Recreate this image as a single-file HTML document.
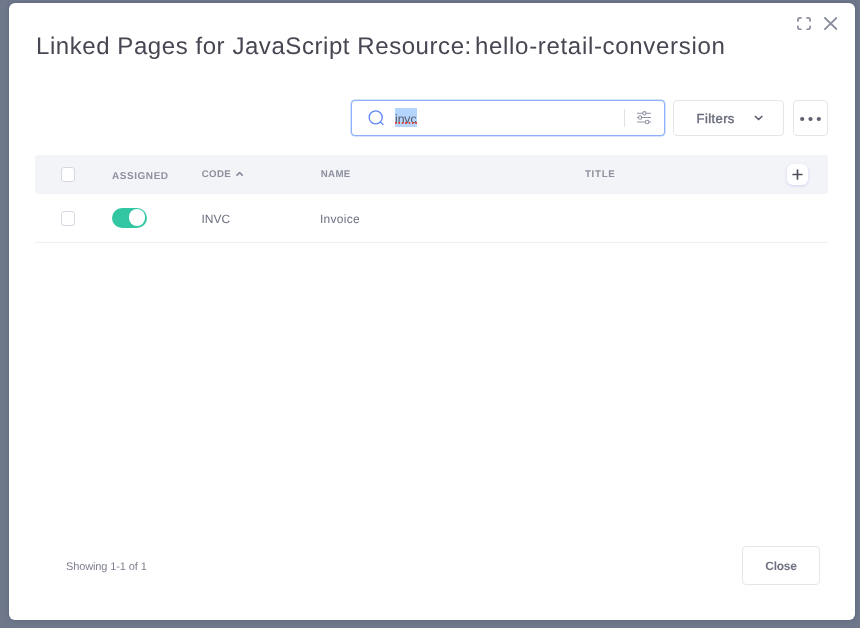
<!DOCTYPE html>
<html><head><meta charset="utf-8">
<style>
*{box-sizing:border-box;margin:0;padding:0}
html,body{width:860px;height:628px;overflow:hidden}
body{text-rendering:geometricPrecision;background:#6f788b;font-family:"Liberation Sans",sans-serif;position:relative}
.modal{will-change:transform;position:absolute;left:9px;top:3px;width:845.700px;height:617px;background:#fff;border-radius:6px;box-shadow:0 0 4px rgba(60,70,100,.45)}
.abs{position:absolute}
h1{position:absolute;left:27px;top:28.600px;font-weight:400;font-size:24px;line-height:30px;color:#464752;white-space:nowrap;letter-spacing:0.565px}
.search{position:absolute;left:342px;top:97px;width:313.800px;height:35.600px;border:1px solid #8db0f9;border-radius:4px;background:#fff;box-shadow:0 0 0 .5px rgba(141,176,249,.7)}
.search .hl{position:absolute;left:43px;top:7.200px;width:21.800px;height:18.500px;background:#b4d5fd}
.search .txt{position:absolute;left:0;top:1.400px;font-size:12.300px;line-height:18.500px;color:#555765;white-space:nowrap;letter-spacing:-.1px}
.search .dots{position:absolute;left:.4px;top:14.200px;width:21.400px;height:2px;background:radial-gradient(circle at 1px 1px,#e8443a .75px,rgba(232,68,58,0) 1.150px) 0 0/3.400px 2px repeat-x}
.search .sep{position:absolute;left:272px;top:8px;width:1px;height:18px;background:#e1e2e8}
.btn{position:absolute;border:1px solid #e5e6eb;border-radius:4px;background:#fff;color:#55586a;font-size:13px;font-weight:400}
.thead{position:absolute;left:26px;top:152px;width:793px;height:39px;background:#f3f4f8;border-radius:3px}
.th{position:absolute;top:14.300px;font-size:9.700px;letter-spacing:.3px;line-height:12px;font-weight:700;color:#8d909e;white-space:nowrap}
.cb{position:absolute;width:14px;height:14.500px;border:1px solid #d6d7e0;border-radius:3px;background:#fff}
.td{position:absolute;font-size:12px;line-height:16px;color:#6c6f80;white-space:nowrap}
.rowline{position:absolute;left:26px;top:239px;width:793px;height:1px;background:#eff0f4}
</style></head><body>
<div class="modal">
<h1>Linked Pages for JavaScript Resource: <span style="margin-left:-4px;letter-spacing:.68px">hello-retail-conversion</span></h1>
<svg class="abs" style="left:788px;top:13.700px" width="14" height="13.300" viewBox="0 0 14 13.300" fill="none" stroke="#8c8f9e" stroke-width="1.800" stroke-linecap="round" stroke-linejoin="round"><path d="M.9 3.900V3a2.100 2.100 0 0 1 2.100-2.100H3.900M10.100.9H11a2.100 2.100 0 0 1 2.100 2.100V3.900M13.100 9.400V10.300a2.100 2.100 0 0 1-2.100 2.100H10.100M3.900 12.400H3a2.100 2.100 0 0 1-2.100-2.100V9.400"/></svg>
<svg class="abs" style="left:814.800px;top:13.900px" width="13.400" height="13.100" viewBox="0 0 13.400 13.100" fill="none" stroke="#8c8f9e" stroke-width="1.900" stroke-linecap="round"><path d="M.95.95L12.450 12.150M12.450.95L.95 12.150"/></svg>

<div class="search">
<svg class="abs" style="left:-1px;top:-1px" width="40" height="35" viewBox="0 0 40 35" fill="none" stroke="#5f86f5" stroke-width="1.300" stroke-linecap="round"><circle cx="24.700" cy="17.400" r="6.500"/><path d="M29.400 22.100L32.100 24.400"/></svg>
<div class="hl"><span class="txt">invc</span><div class="dots"></div></div>
<div class="sep"></div>
<svg class="abs" style="left:283px;top:9px" width="20" height="18" viewBox="0 0 20 18" fill="none" stroke="#9093a2" stroke-width="1.050" stroke-linecap="round"><path d="M2.500 3.300h5.200M11.100 3.300h4.500M2.500 7.500h.9M6.800 7.500h8.800M2.500 12h8M13.900 12h1.700"/><circle cx="9.400" cy="3.300" r="1.700"/><circle cx="5.100" cy="7.500" r="1.700"/><circle cx="12.200" cy="12" r="1.700"/></svg>
</div>

<div class="btn" style="left:664.400px;top:97.300px;width:110.200px;height:35.600px"><span class="abs" style="left:22.200px;top:10px;line-height:16px;font-weight:400;color:#666979;-webkit-text-stroke:.4px #666979;letter-spacing:.4px">Filters</span>
<svg class="abs" style="left:78.200px;top:11.700px" width="12" height="10" viewBox="0 0 12 10" fill="none" stroke="#5d6070" stroke-width="1.700" stroke-linecap="round" stroke-linejoin="round"><path d="M2.400 3.500L5.600 6.500 8.800 3.500"/></svg></div>
<div class="btn" style="left:784.400px;top:97.300px;width:34.600px;height:35.600px"><svg class="abs" style="left:5px;top:13.500px" width="24" height="8" viewBox="0 0 24 8" fill="#5d6070"><circle cx="3.200" cy="4" r="2.100"/><circle cx="11.500" cy="4" r="2.100"/><circle cx="19.800" cy="4" r="2.100"/></svg></div>

<div class="thead">
<div class="cb" style="left:26px;top:12.400px"></div>
<span class="th" style="left:77px;top:15.600px;font-size:10px;letter-spacing:.55px">ASSIGNED</span>
<span class="th" style="left:166.800px">CODE</span>
<svg class="abs" style="left:200.200px;top:15.400px" width="10" height="8" viewBox="0 0 10 8" fill="none" stroke="#8d909e" stroke-width="1.800" stroke-linecap="round" stroke-linejoin="round"><path d="M2 5.200L4.600 2.600 7.200 5.200"/></svg>
<span class="th" style="left:285.800px">NAME</span>
<span class="th" style="left:550px;letter-spacing:.7px">TITLE</span>
<div class="abs" style="left:751.600px;top:9.200px;width:21.200px;height:21px;border-radius:6px;background:#fff;box-shadow:0 1px 3px rgba(90,110,220,.25)"><svg class="abs" style="left:5.100px;top:5px" width="11" height="11" viewBox="0 0 11 11" stroke="#50525f" stroke-width="1.700" stroke-linecap="round"><path d="M5.500 1.100v8.800M1.100 5.500h8.800"/></svg></div>
</div>

<div class="cb" style="left:52px;top:208px"></div>
<div class="abs" style="left:102.700px;top:204.600px;width:35.500px;height:20.400px;border-radius:10.200px;background:#33c6a3"><div class="abs" style="left:16.900px;top:1.800px;width:16.900px;height:16.800px;border-radius:50%;background:#fff"></div></div>
<span class="td" style="left:192.500px;top:208.300px">INVC</span>
<span class="td" style="left:311px;top:208.300px;letter-spacing:.28px">Invoice</span>
<div class="rowline"></div>

<span class="td" style="left:57px;top:555.800px;font-size:11px;color:#7c7f8f;letter-spacing:-.12px">Showing 1-1 of 1</span>
<div class="btn" style="left:733px;top:543px;width:78px;height:39px"><span class="abs" style="left:0;width:100%;text-align:center;top:10.500px;line-height:16px;font-weight:700;font-size:12px;color:#6f7283;letter-spacing:-.28px">Close</span></div>
</div>
</body></html>
